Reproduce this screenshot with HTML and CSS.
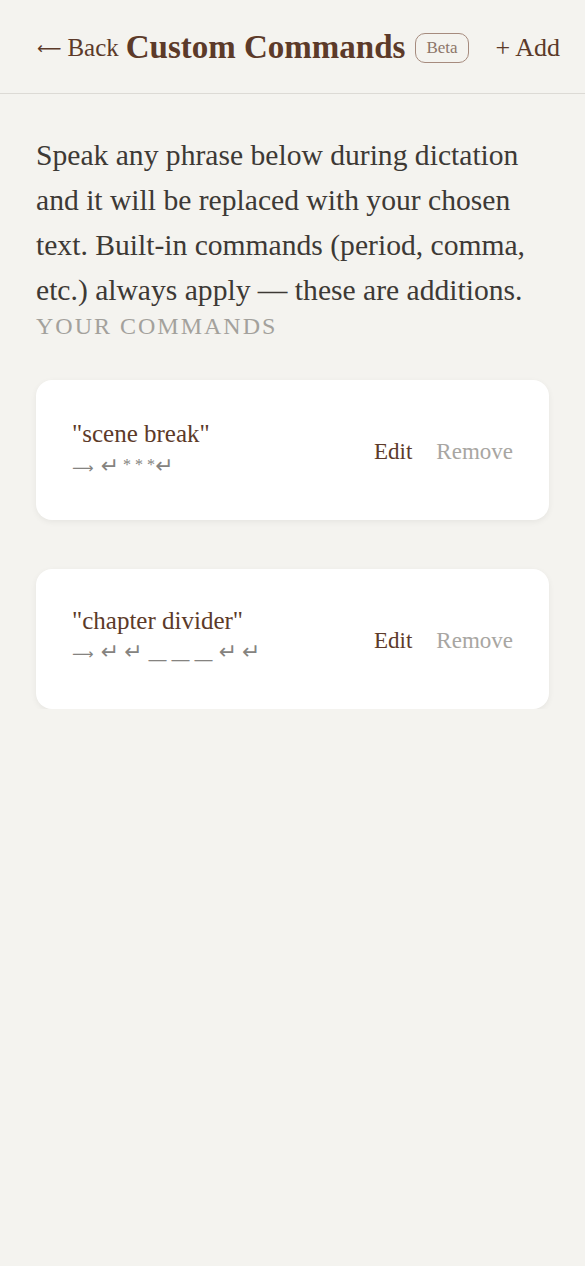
FILE: index.html
```html
<!DOCTYPE html>
<html lang="en">
  <head>
    <meta charset="UTF-8" />
    <meta name="viewport" content="width=device-width, initial-scale=1.0" />
    <title>Custom Commands</title>
    <link rel="stylesheet" href="styles.css">
  </head>

  <body>
    <!-- Barra superior -->
    <header class="topbar">
      <a class="back" href="#"><span class="arrow">⟵</span>Back</a>
      <h1 class="title">Custom Commands</h1>
      <span class="badge">Beta</span>
      <a class="add" href="#">+ Add</a>
    </header>

    <main class="content">
      <p class="intro">
        Speak any phrase below during dictation and it will be replaced with
        your chosen text. Built-in commands (period, comma, etc.) always apply
        — these are additions.
      </p>
      <h2 class="section-label">Your Commands</h2>

      <div class="list">
        <div class="card">
          <div class="card-text">
            <div class="phrase">"scene break"</div>
            <div class="replacement"><span class="to">⟶</span><span class="ret">↵</span><span class="stars">* * *</span><span class="ret">↵</span></div>
          </div>
          <div class="actions">
            <button class="edit">Edit</button>
            <button class="remove">Remove</button>
          </div>
        </div>

        <div class="card">
          <div class="card-text">
            <div class="phrase">"chapter divider"</div>
            <div class="replacement"><span class="to">⟶</span><span class="ret">↵</span><span class="ret">↵</span><span class="dash">———</span><span class="ret">↵</span><span class="ret">↵</span></div>
          </div>
          <div class="actions">
            <button class="edit">Edit</button>
            <button class="remove">Remove</button>
          </div>
        </div>
      </div>
    </main>
  </body>
</html>
```

FILE: styles.css
```css
body {
  margin: 0;
  background-color: #f4f3ef;
  font-family: "Liberation Serif", "DejaVu Serif", serif;
  color: #3d3935;
}

.topbar {
  display: flex;
  align-items: center;
  height: 94px;
  padding: 2px 25px 0 37px;
  border-bottom: 1px solid #dcdad5;
  box-sizing: border-box;
}

.back,
.add {
  color: #5c3a29;
  text-decoration: none;
  font-size: 25px;
  white-space: nowrap;
}

.back .arrow {
  font-family: "DejaVu Sans", sans-serif;
  font-size: 17px;
  margin-right: 6px;
  vertical-align: 2px;
}

.title {
  margin: 0 0 0 7px;
  font-size: 33px;
  font-weight: bold;
  color: #5c3a29;
  white-space: nowrap;
}

.badge {
  margin-left: 10px;
  padding: 4px 10px;
  border: 1px solid #a68b7e;
  border-radius: 10px;
  font-size: 17px;
  color: #8d7669;
}

.add {
  margin-left: auto;
  font-size: 26px;
}

.content {
  padding: 0 36px;
}

.intro {
  margin: 39px 0 0;
  font-size: 29.6px;
  line-height: 45px;
}

.section-label {
  margin: 0;
  font-size: 24px;
  font-weight: normal;
  letter-spacing: 2px;
  text-transform: uppercase;
  color: #a3a19c;
}

.list {
  display: flex;
  flex-direction: column;
  gap: 49px;
  margin-top: 40px;
}

.card {
  display: flex;
  align-items: center;
  height: 140px;
  padding: 0 36px;
  background: white;
  border-radius: 16px;
  box-shadow: 0 2px 6px rgba(0, 0, 0, 0.06);
  box-sizing: border-box;
}

.card-text {
  flex: 1;
}

.phrase {
  font-size: 25px;
  color: #5c3a29;
}

.replacement {
  margin-top: 4px;
  font-size: 22px;
  line-height: 26px;
  color: #858380;
}

.to {
  font-family: "DejaVu Sans", sans-serif;
  font-size: 15px;
  margin-right: 7px;
}

.ret {
  font-family: "DejaVu Sans", sans-serif;
  font-size: 22px;
  margin-right: 5px;
}

.stars {
  font-size: 16px;
  vertical-align: 3px;
  margin: 0 0 0 -1px;
}

.dash {
  font-family: "DejaVu Sans", sans-serif;
  font-size: 20px;
  letter-spacing: 3px;
  vertical-align: -7px;
  margin-right: 2px;
}

.actions {
  display: flex;
  gap: 24px;
  margin-top: 4px;
}

.actions button {
  padding: 0;
  border: none;
  background: none;
  font-family: inherit;
  font-size: 23px;
  cursor: pointer;
}

.edit {
  color: #5c3a29;
}

.remove {
  color: #a8a6a2;
}
```
